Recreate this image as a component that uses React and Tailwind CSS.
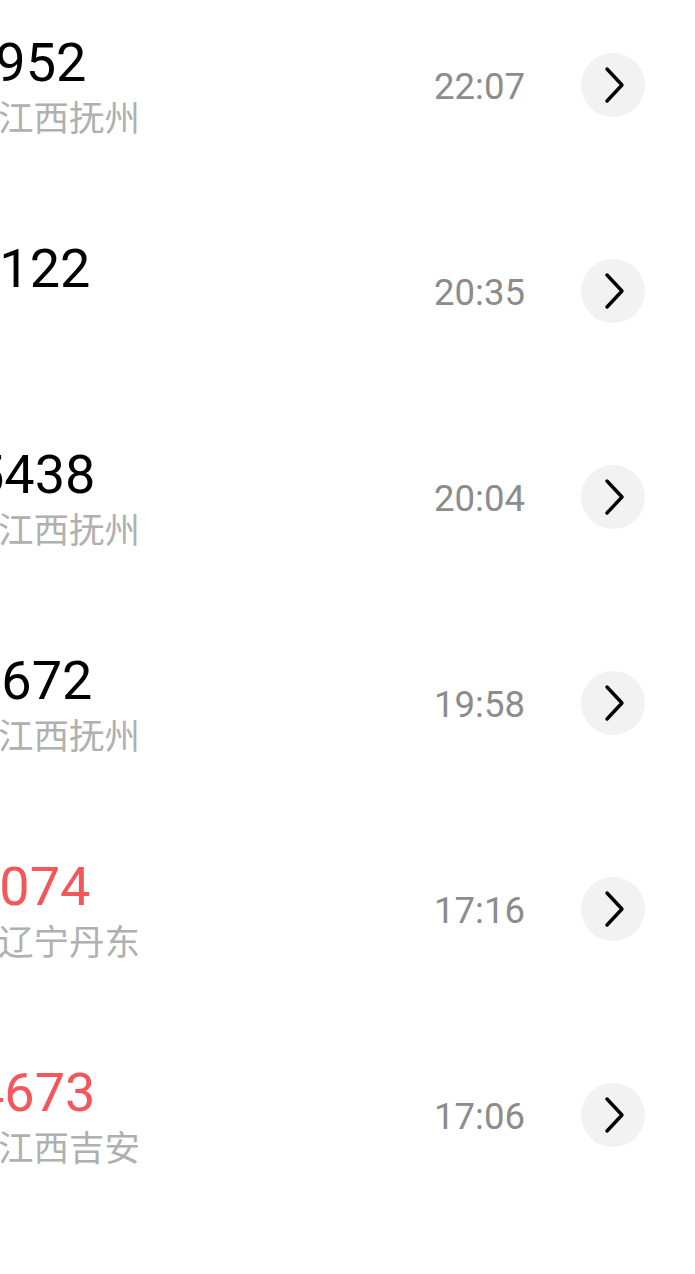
const calls = [
    { number: '1952', shift: 'ml-[-35px]', place: '江西抚州', time: '22:07', missed: false },
    { number: '4122', shift: 'ml-[-31px]', place: '', time: '20:35', missed: false },
    { number: '5438', shift: 'ml-[-26px]', place: '江西抚州', time: '20:04', missed: false },
    { number: '8672', shift: 'ml-[-29px]', place: '江西抚州', time: '19:58', missed: false },
    { number: '1074', shift: 'ml-[-31px]', place: '辽宁丹东', time: '17:16', missed: true },
    { number: '4673', shift: 'ml-[-26px]', place: '江西吉安', time: '17:06', missed: true },
];

function Chevron() {
    return (
        <svg width="24" height="40" viewBox="0 0 24 40" fill="none">
            <path d="M4 4 L19 20 L4 36" stroke="#000" strokeWidth="3.4" strokeLinecap="round" strokeLinejoin="round" />
        </svg>
    );
}

function CallRow({ call }) {
    return (
        <div className="flex h-[206px] items-center">
            <div className="flex min-w-0 flex-1 flex-col whitespace-nowrap">
                <span
                    className={`${call.shift} text-[54px] leading-[60px] ${call.missed ? 'text-[#f5565a]' : 'text-black'}`}
                    style={{ fontFamily: 'Roboto, "Noto Sans", sans-serif' }}
                >
                    {call.number}
                </span>
                <span
                    className="ml-[-2px] mt-[1px] h-[44px] text-[35.5px] leading-[44px] text-[#b0b0b0]"
                    style={{ fontFamily: '"Noto Sans CJK SC", "Noto Sans", sans-serif' }}
                >
                    {call.place}
                </span>
            </div>
            <span
                className="mt-[4px] text-[36.5px] leading-[40px] text-[#8c8c8c]"
                style={{ fontFamily: 'Roboto, "Noto Sans", sans-serif' }}
            >
                {call.time}
            </span>
            <button
                type="button"
                className="ml-[56px] mr-[50px] flex h-[64px] w-[64px] items-center justify-center rounded-full bg-[#f2f2f2]"
            >
                <span className="ml-[4px] flex">
                    <Chevron />
                </span>
            </button>
        </div>
    );
}

export default function App() {
    return (
        <div className="h-[1274px] w-full overflow-hidden bg-white">
            <div className="-mt-[18px] flex flex-col">
                {calls.map((call) => (
                    <CallRow key={call.number + call.time} call={call} />
                ))}
            </div>
        </div>
    );
}
